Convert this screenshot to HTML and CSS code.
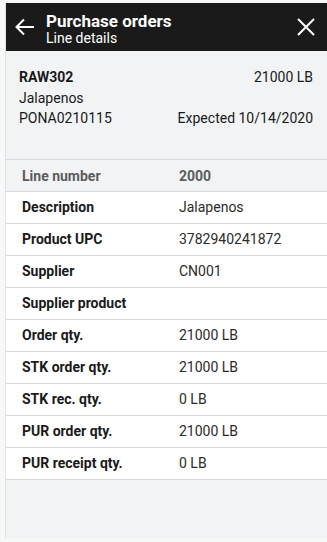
FILE: index.html
```html
<!DOCTYPE html>
<html>
<head>
<meta charset="utf-8">
<link rel="stylesheet" href="styles.css">
</head>
<body>
<div class="panel">
  <header class="bar">
    <svg class="icon back" width="22" height="22" viewBox="0 0 22 22"><path d="M20 11H3M10 3.5L2.5 11L10 18.5" fill="none" stroke="#fff" stroke-width="2"/></svg>
    <div class="titles">
      <div class="title">Purchase orders</div>
      <div class="subtitle">Line details</div>
    </div>
    <svg class="icon close" width="20" height="20" viewBox="0 0 20 20"><path d="M2 2L18 18M18 2L2 18" fill="none" stroke="#fff" stroke-width="2"/></svg>
  </header>
  <section class="summary">
    <div class="srow"><span class="strong">RAW302</span><span>21000 LB</span></div>
    <div class="srow"><span>Jalapenos</span></div>
    <div class="srow"><span>PONA0210115</span><span>Expected 10/14/2020</span></div>
  </section>
  <div class="table">
    <div class="row head"><span class="lbl">Line number</span><span class="val">2000</span></div>
    <div class="row"><span class="lbl">Description</span><span class="val">Jalapenos</span></div>
    <div class="row"><span class="lbl">Product UPC</span><span class="val">3782940241872</span></div>
    <div class="row"><span class="lbl">Supplier</span><span class="val">CN001</span></div>
    <div class="row"><span class="lbl">Supplier product</span><span class="val"></span></div>
    <div class="row"><span class="lbl">Order qty.</span><span class="val">21000 LB</span></div>
    <div class="row"><span class="lbl">STK order qty.</span><span class="val">21000 LB</span></div>
    <div class="row"><span class="lbl">STK rec. qty.</span><span class="val">0 LB</span></div>
    <div class="row"><span class="lbl">PUR order qty.</span><span class="val">21000 LB</span></div>
    <div class="row"><span class="lbl">PUR receipt qty.</span><span class="val">0 LB</span></div>
  </div>
</div>
</body>
</html>
```
FILE: styles.css
```css
html, body { margin: 0; padding: 0; }
body {
  background: #f7f8f8;
  font-family: Roboto, "Noto Sans", sans-serif;
  font-size: 14px;
  color: #1a1a1a;
  width: 327px;
  height: 542px;
  overflow: hidden;
}
.panel {
  margin: 3px 0 0 5px;
  height: 535px;
  background: #f1f3f4;
  border-left: 1px solid #dfe1e2;
  box-sizing: border-box;
  display: flex;
  flex-direction: column;
}
.bar {
  height: 48px;
  background: #1a1a1a;
  color: #fff;
  display: flex;
  align-items: center;
  padding: 3px 10px 0 8px;
  box-sizing: border-box;
  flex-shrink: 0;
}
.back { margin-right: 10px; margin-top: -3px; }
.titles { flex: 1; display: flex; flex-direction: column; }
.title { font-weight: 700; font-size: 17px; line-height: 18px; }
.subtitle { font-size: 14px; line-height: 16px; }
.close { margin-right: 1px; margin-top: -3px; }
.summary {
  padding: 16px 14px 30px 13px;
  border-bottom: 1px solid #d6dadd;
  display: flex;
  flex-direction: column;
}
.srow {
  display: flex;
  justify-content: space-between;
  line-height: 20.5px;
}
.strong { font-weight: 700; }
.table { margin-top: 1px; }
.row {
  display: flex;
  height: 31px;
  align-items: center;
  border-bottom: 1px solid #d6dadd;
  background: #fff;
  padding-left: 16px;
}
.row.head { background: #f1f3f4; color: #5c5c5c; height: 30px; }
.row.head .val { font-weight: 700; color: #5c5c5c; }
.lbl { width: 157px; font-weight: 700; }
.val { color: #2b2b2b; }
```
